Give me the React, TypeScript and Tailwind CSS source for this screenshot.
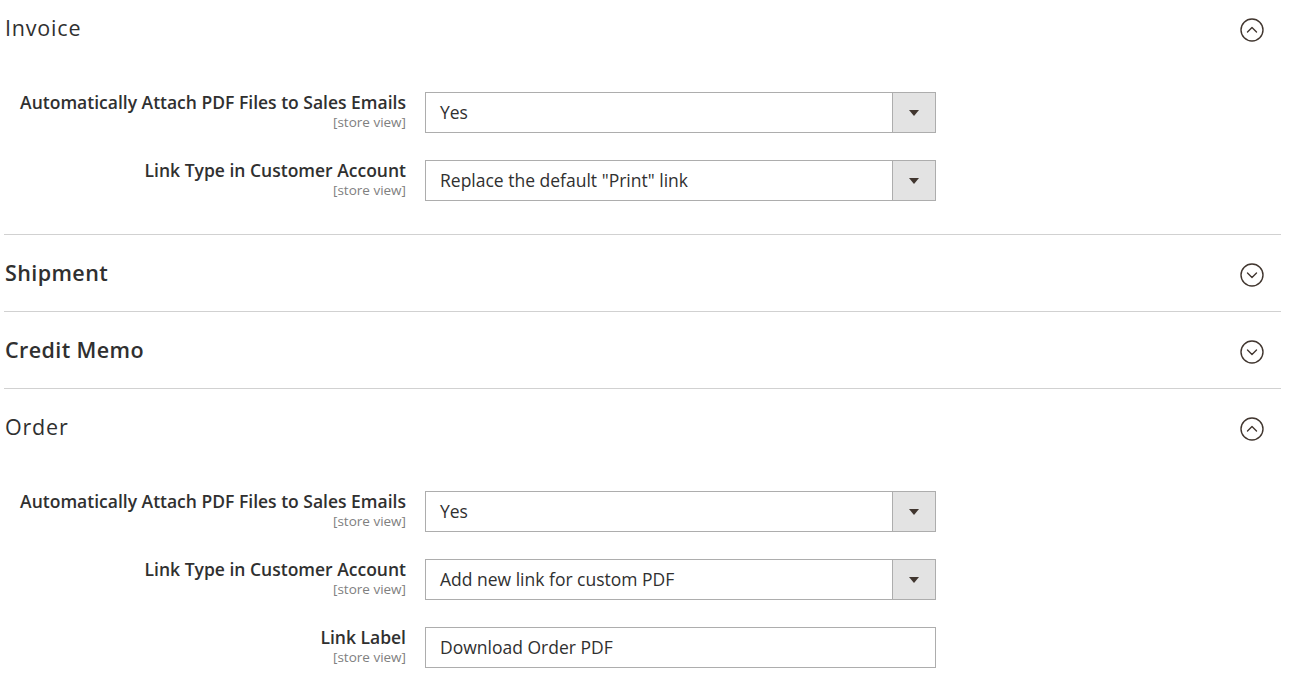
const font = { fontFamily: '"Open Sans", "Liberation Sans", sans-serif' };

type Field = { label: string; value: string; kind: "select" | "input" };

type Section = { title: string; open: boolean; bold: boolean; fields: Field[] };

const sections: Section[] = [
  {
    title: "Invoice",
    open: true,
    bold: false,
    fields: [
      { label: "Automatically Attach PDF Files to Sales Emails", value: "Yes", kind: "select" },
      { label: "Link Type in Customer Account", value: 'Replace the default "Print" link', kind: "select" },
    ],
  },
  { title: "Shipment", open: false, bold: true, fields: [] },
  { title: "Credit Memo", open: false, bold: true, fields: [] },
  {
    title: "Order",
    open: true,
    bold: false,
    fields: [
      { label: "Automatically Attach PDF Files to Sales Emails", value: "Yes", kind: "select" },
      { label: "Link Type in Customer Account", value: "Add new link for custom PDF", kind: "select" },
      { label: "Link Label", value: "Download Order PDF", kind: "input" },
    ],
  },
];

function Toggle({ open }: { open: boolean }) {
  return (
    <svg width="26" height="26" viewBox="0 0 26 26" fill="none" stroke="#41362f" strokeWidth="1.4">
      <circle cx="13" cy="13" r="11" />
      <path d={open ? "M8.5 15 L13 10.5 L17.5 15" : "M8.5 11 L13 15.5 L17.5 11"} strokeLinecap="round" strokeLinejoin="round" />
    </svg>
  );
}

function Control({ field }: { field: Field }) {
  return (
    <div className="flex h-[41px] w-[511px] items-stretch border border-[#adadad] bg-white">
      <div className="flex flex-1 items-center pl-[14px] text-[17.5px] text-[#303030]">{field.value}</div>
      {field.kind === "select" && (
        <div className="flex w-[43px] items-center justify-center border-l border-[#adadad] bg-[#e3e3e3]">
          <svg width="10" height="6" viewBox="0 0 10 6">
            <path d="M0 0 H10 L5 6 Z" fill="#41362f" />
          </svg>
        </div>
      )}
    </div>
  );
}

export default function App() {
  return (
    <div className="-mt-[10px] min-h-[697px] bg-white pl-1" style={font}>
      <div className="w-[1277px]">
        {sections.map((s, i) => (
          <div key={s.title} className={i > 0 ? "border-t border-[#d1d1d1]" : ""}>
            <div className="flex h-[76px] items-center justify-between pr-[16px]">
              <h2
                className={`pl-px text-[21.5px] text-[#303030] ${
                  s.bold ? "font-semibold tracking-[0.4px]" : "font-normal tracking-[0.8px]"
                }`}
              >
                {s.title}
              </h2>
              <div className="mt-[3px]">
                <Toggle open={s.open} />
              </div>
            </div>
            {s.open && (
              <div className="flex flex-col gap-[27px] pt-[26px] pb-[33px]">
                {s.fields.map((f) => (
                  <div key={f.label} className="flex items-start gap-[19px]">
                    <div className="w-[402px] text-right">
                      <div className="text-[17.5px] leading-[21px] font-semibold text-[#303030]">{f.label}</div>
                      <div className="mt-[2px] text-[13.5px] leading-[15px] text-[#808080]">[store view]</div>
                    </div>
                    <Control field={f} />
                  </div>
                ))}
              </div>
            )}
          </div>
        ))}
      </div>
    </div>
  );
}
